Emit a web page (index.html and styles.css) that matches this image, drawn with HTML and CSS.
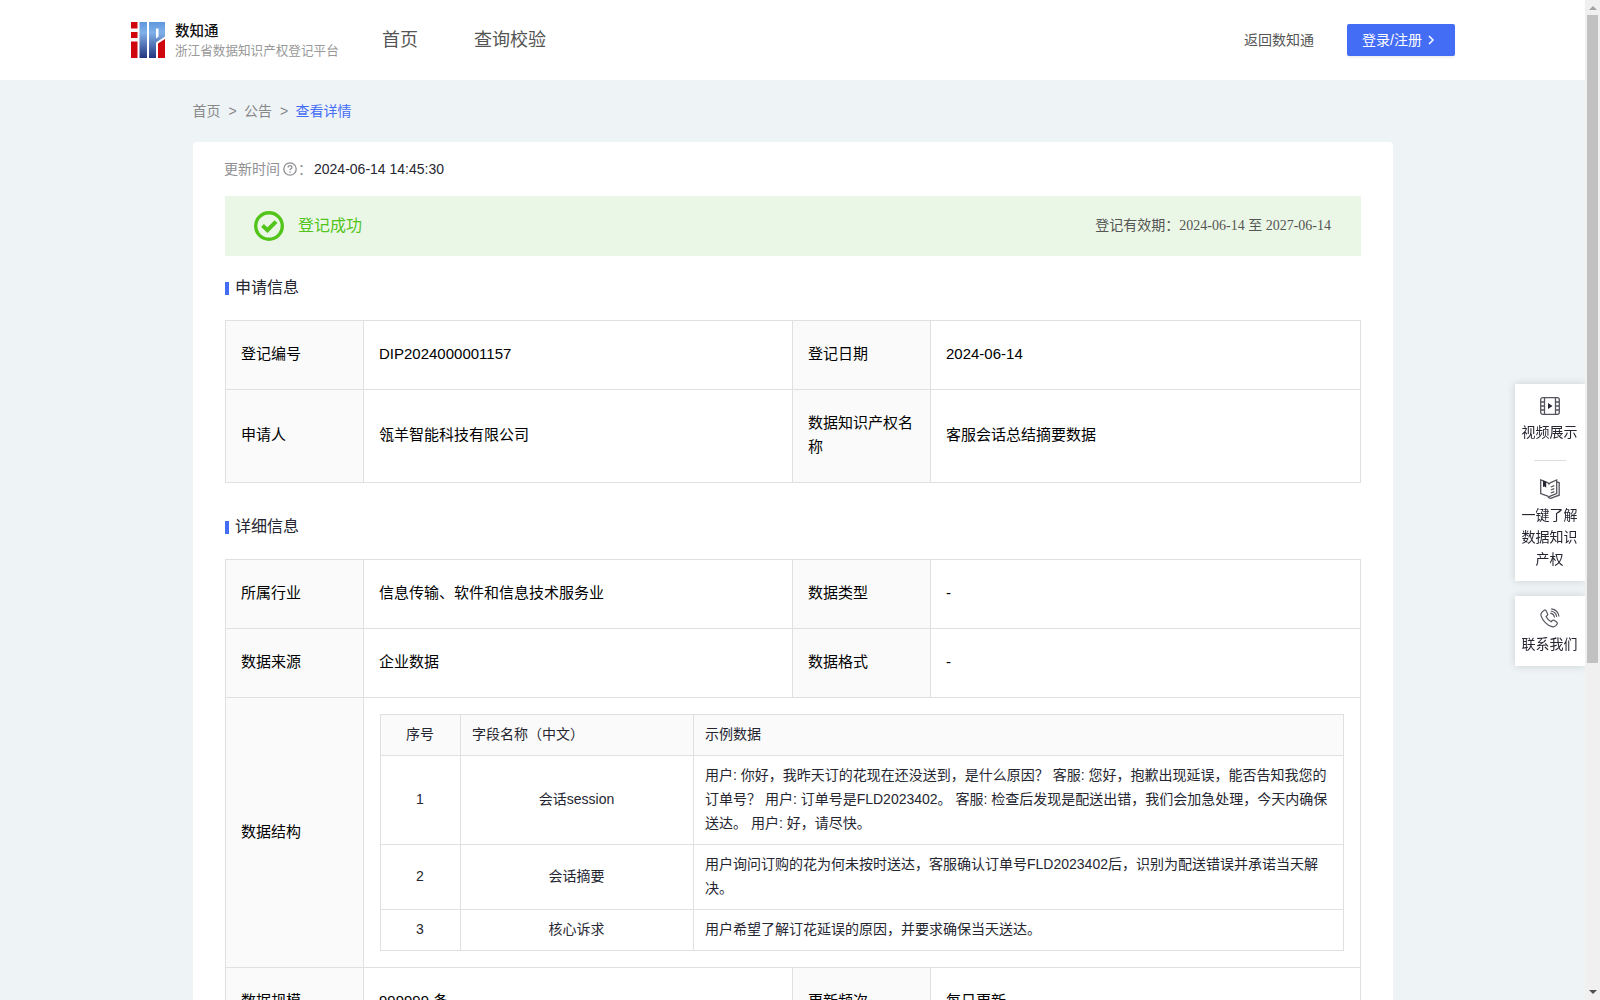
FILE: index.html
```html
<!DOCTYPE html>
<html lang="zh-CN">
<head>
  <meta charset="UTF-8">
  <title>数知通 - 查看详情</title>
  <link rel="stylesheet" href="styles.css">
</head>
<body>
<header class="header">
  <a class="logo" href="#">
    <svg class="logo-icon" width="34" height="36" viewBox="0 0 34 36">
      <defs>
        <linearGradient id="blue" gradientUnits="userSpaceOnUse" x1="0" y1="0" x2="0" y2="36">
          <stop offset="0" stop-color="#5f97dd"/>
          <stop offset=".3" stop-color="#7fb0e8"/>
          <stop offset="1" stop-color="#24357f"/>
        </linearGradient>
      </defs>
      <path fill="#d0060f" d="M0 0h6.500v6.500H0zM0 10h6.500v6H0zM0 19.500h6.500V36H0zM27 21.500l7-4.500v19h-7z"/>
      <path fill="url(#blue)" d="M8.500 0h7.500v36H8.500zM18 0h16v14.500l-9 6V36h-7zM25 6.500v10l2.500-1.800V6.500z" fill-rule="evenodd"/>
    </svg>
    <span class="logo-text">
      <strong>数知通</strong>
      <small>浙江省数据知识产权登记平台</small>
    </span>
  </a>
  <nav class="nav">
    <a href="#">首页</a>
    <a href="#">查询校验</a>
  </nav>
  <div class="header-right">
    <a class="back" href="#">返回数知通</a>
    <a class="btn" href="#">登录/注册
      <svg width="8" height="10" viewBox="0 0 8 10"><path d="M2 1l4 4-4 4" fill="none" stroke="#fff" stroke-width="1.5"/></svg>
    </a>
  </div>
</header>

<main class="container">
  <div class="breadcrumb">
    <span>首页</span><i>&gt;</i><span>公告</span><i>&gt;</i><span class="active">查看详情</span>
  </div>

  <div class="card">
    <div class="update">
      <span>更新时间</span>
      <svg width="14" height="14" viewBox="0 0 14 14" fill="none" stroke="#8f8f94" stroke-width="1.3">
        <circle cx="7" cy="7" r="6.2"/>
        <path d="M5.1 5.6c0-2.6 3.8-2.5 3.8-.2 0 1.4-1.9 1.3-1.9 2.9M7 9.4v1.3"/>
      </svg>
      <span class="colon">：</span>
      <span class="time">2024-06-14 14:45:30</span>
    </div>

    <div class="banner">
      <svg width="30" height="30" viewBox="0 0 30 30" fill="none" stroke="#52c41a">
        <circle cx="15" cy="15" r="13.3" stroke-width="3.4"/>
        <path d="M8.500 14.500l5 4.700 8.500-8.500" stroke-width="4"/>
      </svg>
      <span class="status">登记成功</span>
      <span class="valid">登记有效期：<b>2024-06-14 至 2027-06-14</b></span>
    </div>

    <h2 class="title">申请信息</h2>
    <table class="info">
      <colgroup><col class="c-label"><col class="c-value"><col class="c-label"><col></colgroup>
      <tr>
        <th>登记编号</th><td>DIP2024000001157</td>
        <th>登记日期</th><td>2024-06-14</td>
      </tr>
      <tr>
        <th>申请人</th><td>瓴羊智能科技有限公司</td>
        <th>数据知识产权名称</th><td>客服会话总结摘要数据</td>
      </tr>
    </table>

    <h2 class="title">详细信息</h2>
    <table class="info">
      <colgroup><col class="c-label"><col class="c-value"><col class="c-label"><col></colgroup>
      <tr>
        <th>所属行业</th><td>信息传输、软件和信息技术服务业</td>
        <th>数据类型</th><td>-</td>
      </tr>
      <tr>
        <th>数据来源</th><td>企业数据</td>
        <th>数据格式</th><td>-</td>
      </tr>
      <tr>
        <th>数据结构</th>
        <td class="nested" colspan="3">
          <table class="fields">
            <colgroup><col class="c-no"><col class="c-name"><col></colgroup>
            <tr class="head"><td>序号</td><td>字段名称（中文）</td><td>示例数据</td></tr>
            <tr>
              <td>1</td><td>会话session</td>
              <td>用户: 你好，我昨天订的花现在还没送到，是什么原因？ 客服: 您好，抱歉出现延误，能否告知我您的<br>订单号？ 用户: 订单号是FLD2023402。 客服: 检查后发现是配送出错，我们会加急处理，今天内确保<br>送达。 用户: 好，请尽快。</td>
            </tr>
            <tr>
              <td>2</td><td>会话摘要</td>
              <td>用户询问订购的花为何未按时送达，客服确认订单号FLD2023402后，识别为配送错误并承诺当天解<br>决。</td>
            </tr>
            <tr>
              <td>3</td><td>核心诉求</td>
              <td>用户希望了解订花延误的原因，并要求确保当天送达。</td>
            </tr>
          </table>
        </td>
      </tr>
      <tr>
        <th>数据规模</th><td>999999 条</td>
        <th>更新频次</th><td>每日更新</td>
      </tr>
    </table>
  </div>
</main>

<aside class="side">
  <div class="side-box">
    <a class="side-item" href="#">
      <svg width="20" height="18" viewBox="0 0 20 18" fill="none" stroke="#55555f" stroke-width="1.3">
        <rect x=".7" y=".7" width="18.6" height="16.6" rx="2"/>
        <path d="M4.5 1v16M15.5 1v16M1 5h3.5M1 9h3.5M1 13h3.5M15.5 5H19M15.5 9H19M15.5 13H19"/>
        <path d="M8 6v6l4.5-3z" fill="#252631" stroke="none"/>
      </svg>
      <span>视频展示</span>
    </a>
    <hr>
    <a class="side-item book" href="#">
      <svg width="20" height="20" viewBox="0 0 20 20" fill="none" stroke="#55555f" stroke-width="1.3">
        <path d="M.7.8l7 2.800c.7.3 1 .8 1.300 1.400.4-.7 1-1.100 1.700-1.400l6-2.600v13.500l-6.500 2.600-1.300.9-1.200-.9L.7 14.500z"/>
        <path d="M17 3.200l2.200.4v12.600l-6 2.100-2.400 1.100-3-.9M10.800 8l3.500-1.400M10.800 11l3.500-1.400M10.800 14l3.500-1.400"/>
        <path d="M3 1.500l3.200 1.300v6L4.600 7.500 3 8z" fill="#252631" stroke="none"/>
      </svg>
      <span>一键了解数据知识产权</span>
    </a>
  </div>
  <div class="side-box phone">
    <a class="side-item" href="#">
      <svg width="20" height="20" viewBox="0 0 20 20" fill="none" stroke="#55555f" stroke-width="1.2">
        <path d="M4.300 2.200L2 4.100c-1 1-1.300 2.400-.8 4C2.700 12.600 7 17.300 12 18.700c1.400.4 2.800 0 3.800-1.100l1.200-1.500c.5-.7.4-1.400-.2-1.900l-2.700-1.900c-.6-.4-1.300-.3-1.800.2l-1.100 1.200C8.800 12.700 7 10.700 6 8.600l1.200-1.100c.6-.5.7-1.100.3-1.800L6 2.600c-.4-.7-1.100-.8-1.700-.4z"/>
        <path d="M10.300 5.200c2.300.4 3.800 1.900 4.200 4.300M10.800 3c3.300.4 5.400 2.500 5.900 5.900M11.200.8c4.400.5 7.200 3.300 7.800 7.700"/>
      </svg>
      <span>联系我们</span>
    </a>
  </div>
</aside>

<div class="scrollbar"><i class="up"></i><i class="thumb"></i><i class="down"></i></div>
</body>
</html>
```
FILE: styles.css
```css
* {
    box-sizing: border-box;
}
html {
    overflow: hidden;
}
body {
    margin: 0;
    padding-right: 15px;
    height: 1000px;
    overflow: hidden;
    background: #eef3f6;
    color: #252631;
    font: 14px/24px "Liberation Sans", "Noto Sans CJK SC", sans-serif;
}
a {
    color: inherit;
    text-decoration: none;
}
i {
    font-style: normal;
}
svg {
    display: block;
    flex: none;
}

/* header */
.header {
    display: flex;
    align-items: center;
    height: 80px;
    padding: 0 130px 0 131px;
    background: #fff;
    white-space: nowrap;
}
.logo {
    display: flex;
    align-items: center;
    gap: 10px;
    width: 251px;
}
.logo-text {
    display: flex;
    flex-direction: column;
    padding-top: 1px;
}
.logo-text strong {
    font-size: 14.5px;
    font-weight: 500;
    line-height: 20px;
    color: #111;
}
.logo-text small {
    font-size: 12.6px;
    line-height: 20px;
    color: #999;
}
.nav {
    display: flex;
    gap: 56px;
    font-size: 18px;
    color: #555;
}
.nav a {
    line-height: 26px;
}
.header-right {
    display: flex;
    align-items: center;
    gap: 33px;
    margin-left: auto;
    color: #555;
}
.btn {
    display: flex;
    align-items: center;
    gap: 5px;
    width: 108px;
    height: 32px;
    padding: 0 15px 1px;
    border-radius: 2px;
    background: #446df6;
    box-shadow: 0 2px 2px rgba(0, 0, 0, .06);
    color: #fff;
}

/* content */
.container {
    width: 1200px;
    margin: 0 192px 0 193px;
}
.breadcrumb {
    display: flex;
    height: 62px;
    padding-top: 19px;
    color: #888;
}
.breadcrumb i {
    width: 24px;
    text-align: center;
}
.breadcrumb span {
    margin-left: -.5px;
}
.breadcrumb .active {
    color: #446df6;
}
.card {
    height: 900px;
    padding: 14px 32px 0;
    border-radius: 4px 4px 0 0;
    background: #fff;
}
.update {
    display: flex;
    align-items: center;
    height: 26px;
    color: #8f8f94;
}
.update span:first-child {
    margin-left: -1px;
}
.update svg {
    margin-left: 3px;
}
.update .colon {
    width: 17px;
    padding-left: 1px;
}
.update .time {
    color: #252631;
}
.banner {
    display: flex;
    align-items: center;
    height: 60px;
    margin-top: 14px;
    padding: 0 29px;
    background: #ebf7e6;
}
.status {
    margin-left: 14px;
    font-size: 16px;
    color: #52c41a;
}
.valid {
    margin: -2px 1px 0 auto;
    color: #555;
}
.valid b {
    font-family: "Liberation Serif", "Noto Sans CJK SC", serif;
    font-weight: normal;
}
.title {
    display: flex;
    align-items: center;
    height: 24px;
    margin: 20px 0;
    font-size: 16px;
    font-weight: normal;
}
.title::before {
    content: "";
    width: 4px;
    height: 13px;
    margin: 1px 6px 0 0;
    background: #446df6;
}
.info + .title {
    margin-top: 32px;
}

/* tables */
.info,
.fields {
    width: 100%;
    table-layout: fixed;
    border-collapse: separate;
    border-spacing: 0;
    border: solid #e0e0e0;
    border-width: 1px 0 0 1px;
}
.info th,
.info td {
    padding: 21px 16px 23px 15px;
    border: solid #e0e0e0;
    border-width: 0 1px 1px 0;
    font-size: 15px;
    font-weight: normal;
    text-align: left;
    color: #000;
}
.info th {
    background: #fafafa;
}
.c-label {
    width: 138px;
}
.c-value {
    width: 429px;
}
.info .nested {
    padding: 16px;
}
.c-no {
    width: 80px;
}
.c-name {
    width: 233px;
}
.fields td,
.info .fields td {
    padding: 7px 12px 9px 11px;
    font-size: 14px;
    text-align: center;
    color: #252631;
    white-space: nowrap;
}
.info .fields td:last-child,
.info .fields .head td:nth-child(2) {
    text-align: left;
}
.info .fields .head td {
    background: #fafafa;
}

/* floating shortcuts */
.side {
    position: fixed;
    top: 384px;
    right: 15px;
    width: 70px;
}
.side-box {
    height: 197px;
    margin-bottom: 15px;
    padding-top: 13px;
    background: #fff;
    box-shadow: 0 0 8px rgba(0, 0, 0, .15);
}
.side-box.phone {
    height: 70px;
}
.side-item {
    display: flex;
    flex-direction: column;
    align-items: center;
    gap: 6px;
    padding: 0 7px 0 6px;
    line-height: 22px;
    text-align: center;
}
.side-item.book {
    gap: 5px;
}
.phone .side-item {
    gap: 5px;
    margin-top: -1px;
}
.side hr {
    width: 32px;
    height: 1px;
    margin: 17px auto 18px;
    border: 0;
    background: #ddd;
}

/* page scrollbar */
.scrollbar {
    position: fixed;
    top: 0;
    right: 0;
    display: flex;
    flex-direction: column;
    align-items: center;
    width: 15px;
    height: 1000px;
    background: #f0f0f0;
}
.scrollbar .up,
.scrollbar .down {
    border: 4px solid transparent;
    border-top-width: 0;
    border-bottom-color: #a3a3a3;
    margin: 6px 0 5px;
}
.scrollbar .down {
    border-top: 4px solid #505050;
    border-bottom: 0;
    margin: auto 0 6px;
}
.scrollbar .thumb {
    width: 11px;
    height: 648px;
    background: #c1c1c1;
}
```
